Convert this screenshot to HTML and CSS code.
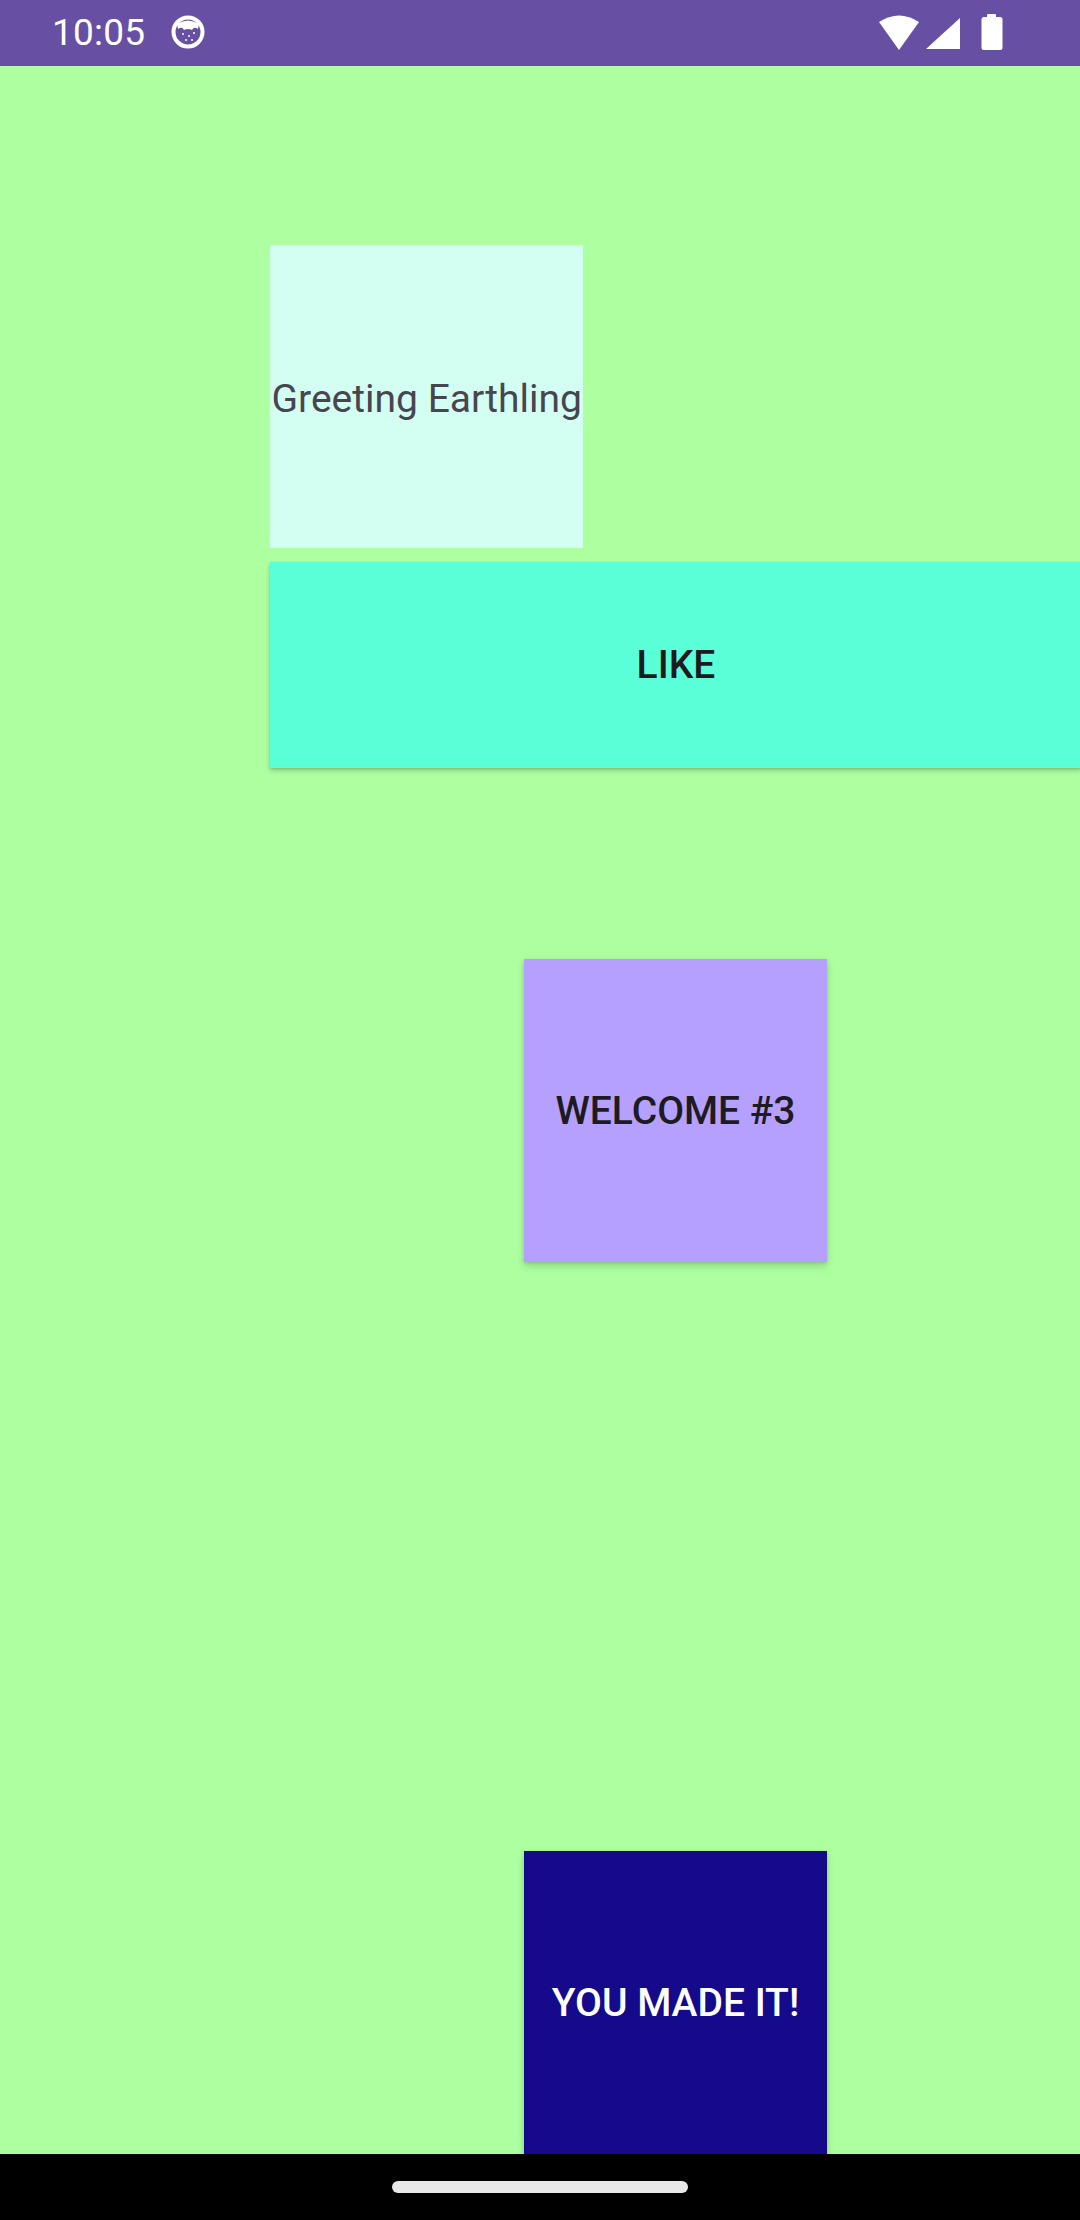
FILE: index.html
```html
<!DOCTYPE html>
<html>
<head>
<meta charset="utf-8">
<link rel="stylesheet" href="styles.css">
</head>
<body>
<div class="screen">
  <div class="status">
    <div class="status-left">
      <span class="time">10:05</span>
      <svg class="cat" width="38" height="38" viewBox="0 0 38 38">
        <circle cx="19" cy="19" r="14.5" fill="none" stroke="#fff" stroke-width="4"/>
        <path d="M8 11 Q19 4 30 11 L29 16 Q25 13 23 17 Q19 15 15 17 Q13 13 9 16 Z" fill="#fff"/>
        <circle cx="14" cy="21" r="1" fill="#fff"/>
        <circle cx="20" cy="23" r="1" fill="#fff"/>
        <circle cx="25" cy="20" r="1" fill="#fff"/>
        <circle cx="17" cy="27" r="1" fill="#fff"/>
        <circle cx="23" cy="27" r="1" fill="#fff"/>
      </svg>
    </div>
    <div class="status-right">
      <svg width="42" height="36" viewBox="0 0 42 36">
        <path d="M1 7 Q21 -6 41 7 L21 35 Z" fill="#fff"/>
      </svg>
      <svg width="36" height="33" viewBox="0 0 36 33">
        <path d="M1 32 L35 1 L35 32 Z" fill="#fff"/>
      </svg>
      <svg width="24" height="37" viewBox="0 0 24 37">
        <rect x="7" y="0" width="9" height="5" rx="1" fill="#fff"/>
        <rect x="1.5" y="3" width="21" height="33" rx="2.5" fill="#fff"/>
      </svg>
    </div>
  </div>
  <div class="content">
    <div class="greeting">Greeting Earthling</div>
    <div class="like">LIKE</div>
    <div class="tile welcome">WELCOME #3</div>
    <div class="tile made">YOU MADE IT!</div>
  </div>
  <div class="navbar"><div class="pill"></div></div>
</div>
</body>
</html>
```
FILE: styles.css
```css
html, body {
  margin: 0;
  padding: 0;
}
body {
  font-family: Roboto, "Noto Sans", sans-serif;
  background: #000;
}
.screen {
  width: 1080px;
  height: 2220px;
  display: flex;
  flex-direction: column;
  overflow: hidden;
}
.status {
  height: 66px;
  flex: none;
  background: #6750a4;
  display: flex;
  align-items: center;
  justify-content: space-between;
  padding: 0 76px 0 52px;
  box-sizing: border-box;
  color: #fff;
}
.status-left {
  display: flex;
  align-items: center;
  gap: 24px;
}
.time {
  font-size: 37px;
  line-height: 1;
  letter-spacing: 0.2px;
  margin-top: -2px;
}
.cat {
  margin-top: -2px;
}
.status-right {
  display: flex;
  align-items: center;
  gap: 5px;
}
.status-right svg {
  display: block;
}
.status-right svg:nth-child(3) {
  margin-left: 14px;
  margin-top: -1px;
}
.content {
  flex: 1;
  background: #adffa0;
  padding-left: 270px;
  overflow: hidden;
  display: flex;
  flex-direction: column;
  align-items: flex-start;
}
.greeting {
  margin-top: 179px;
  height: 303px;
  box-sizing: border-box;
  padding: 4px 1.5px 0;
  background: #d3fff3;
  color: #49454f;
  font-size: 39px;
  display: flex;
  align-items: center;
  white-space: nowrap;
}
.like {
  margin-top: 14px;
  flex: none;
  width: 812px;
  height: 206px;
  background: #5affd8;
  color: #1d1b20;
  font-size: 39px;
  font-weight: 500;
  display: flex;
  align-items: center;
  justify-content: center;
  box-shadow: 0 3px 5px rgba(0, 0, 0, 0.18), 0 1px 2px rgba(0, 0, 0, 0.12);
}
.tile {
  margin-left: 254px;
  flex: none;
  width: 303px;
  height: 303px;
  font-size: 39px;
  font-weight: 500;
  display: flex;
  align-items: center;
  justify-content: center;
  white-space: nowrap;
  box-shadow: 0 4px 8px rgba(0, 0, 0, 0.16), 0 1px 3px rgba(0, 0, 0, 0.12);
}
.welcome {
  margin-top: 191px;
  background: #b5a0ff;
  color: #1d1b20;
}
.made {
  margin-top: 589px;
  background: #150a8c;
  color: #fff;
}
.navbar {
  height: 66px;
  flex: none;
  background: #000;
  display: flex;
  justify-content: center;
  padding-top: 27px;
  box-sizing: border-box;
}
.pill {
  width: 296px;
  height: 12px;
  border-radius: 6px;
  background: #e8e8e8;
}
```
